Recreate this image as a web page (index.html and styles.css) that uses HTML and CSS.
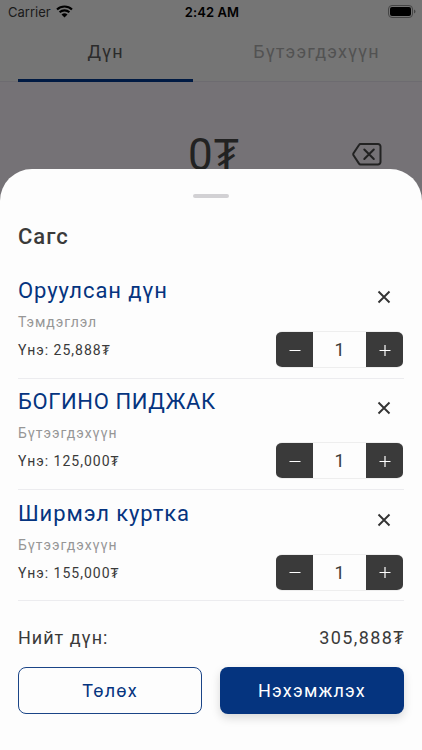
FILE: index.html
```html
<!DOCTYPE html>
<html lang="mn">
  <head>
    <meta charset="UTF-8" />
    <meta name="viewport" content="width=device-width, initial-scale=1.0" />
    <title>Сагс</title>
    <link rel="stylesheet" href="styles.css" />
  </head>
  <body>
    <div class="screen">
      <header>
        <div class="status-bar">
          <div class="carrier">
            <span>Carrier</span>
            <svg class="wifi" viewBox="0 0 17 13" width="17" height="13">
              <path d="M1 4.6a10.8 10.8 0 0 1 15 0M3.6 7.3a7.1 7.1 0 0 1 9.8 0" fill="none" stroke="#000" stroke-width="2.1" />
              <path d="M5.5 9.6a4.3 4.3 0 0 1 6 0L8.5 12.6z" />
            </svg>
          </div>
          <span class="time">2:42 AM</span>
          <svg class="battery" viewBox="0 0 28 13" width="28" height="13">
            <rect x="0.5" y="0.5" width="24" height="12" rx="3.5" fill="none" stroke="#454545" />
            <rect x="2" y="2" width="21" height="9" rx="2" />
            <path d="M26 4.5c2 .7 2 3.3 0 4z" fill="#454545" />
          </svg>
        </div>
        <nav class="tabs">
          <a class="tab active"><span>Дүн</span></a>
          <a class="tab"><span>Бүтээгдэхүүн</span></a>
        </nav>
      </header>
      <div class="amount-row">
        <span class="amount">0₮</span>
        <svg class="backspace" viewBox="0 0 30 23" width="30" height="23" fill="none" stroke="#222" stroke-width="2" stroke-linecap="round" stroke-linejoin="round">
          <path d="M8.5 1H26a2.500 2.500 0 0 1 2.500 2.500v15.500a2.500 2.500 0 0 1-2.500 2.500H8.500Q7.600 21.500 7 20.600L1.500 12.300Q1 11.300 1.500 10.300L7 2Q7.600 1 8.500 1z" />
          <path d="M12.300 6.500l9.500 9.500M21.800 6.500l-9.500 9.500" />
        </svg>
      </div>
    </div>

    <main class="sheet">
      <div class="handle"></div>
      <h1>Сагс</h1>

      <section class="item">
        <div class="info">
          <h2>Оруулсан дүн</h2>
          <p class="type">Тэмдэглэл</p>
          <p class="price">Үнэ: 25,888₮</p>
        </div>
        <div class="actions">
          <button class="remove" aria-label="Устгах">
            <svg viewBox="0 0 14 14" width="14" height="14"><path d="M1.500 1.500l11 11M12.500 1.500l-11 11" /></svg>
          </button>
          <div class="counter">
            <button aria-label="Хасах"><svg viewBox="0 0 12 12" width="12" height="12"><path d="M.5 6.500h11" /></svg></button>
            <span>1</span>
            <button aria-label="Нэмэх"><svg viewBox="0 0 12 12" width="12" height="12"><path d="M.5 6.500h11M6 1v11" /></svg></button>
          </div>
        </div>
      </section>

      <section class="item">
        <div class="info">
          <h2 class="caps">БОГИНО ПИДЖАК</h2>
          <p class="type">Бүтээгдэхүүн</p>
          <p class="price">Үнэ: 125,000₮</p>
        </div>
        <div class="actions">
          <button class="remove" aria-label="Устгах">
            <svg viewBox="0 0 14 14" width="14" height="14"><path d="M1.500 1.500l11 11M12.500 1.500l-11 11" /></svg>
          </button>
          <div class="counter">
            <button aria-label="Хасах"><svg viewBox="0 0 12 12" width="12" height="12"><path d="M.5 6.500h11" /></svg></button>
            <span>1</span>
            <button aria-label="Нэмэх"><svg viewBox="0 0 12 12" width="12" height="12"><path d="M.5 6.500h11M6 1v11" /></svg></button>
          </div>
        </div>
      </section>

      <section class="item">
        <div class="info">
          <h2>Ширмэл куртка</h2>
          <p class="type">Бүтээгдэхүүн</p>
          <p class="price">Үнэ: 155,000₮</p>
        </div>
        <div class="actions">
          <button class="remove" aria-label="Устгах">
            <svg viewBox="0 0 14 14" width="14" height="14"><path d="M1.500 1.500l11 11M12.500 1.500l-11 11" /></svg>
          </button>
          <div class="counter">
            <button aria-label="Хасах"><svg viewBox="0 0 12 12" width="12" height="12"><path d="M.5 6.500h11" /></svg></button>
            <span>1</span>
            <button aria-label="Нэмэх"><svg viewBox="0 0 12 12" width="12" height="12"><path d="M.5 6.500h11M6 1v11" /></svg></button>
          </div>
        </div>
      </section>

      <div class="total">
        <span class="total-label">Нийт дүн:</span>
        <span class="total-sum">305,888₮</span>
      </div>
      <div class="buttons">
        <button class="btn btn-outline">Төлөх</button>
        <button class="btn btn-primary">Нэхэмжлэх</button>
      </div>
    </main>
  </body>
</html>
```
FILE: styles.css
```css
* {
  box-sizing: border-box;
}

body {
  margin: 0;
  height: 750px;
  position: relative;
  overflow: hidden;
  background: #757276;
  color: #3a3a3a;
  font-family: Roboto, "Noto Sans", sans-serif;
}

h1,
h2,
p {
  margin: 0;
  white-space: nowrap;
}

button {
  padding: 0;
  border: none;
  background: none;
  font-family: inherit;
}

/* dimmed page behind the sheet */
header {
  height: 82px;
  background: #757575;
  border-bottom: 1px solid #6d6b70;
}

.status-bar {
  height: 23px;
  padding: 0 6px 0 8px;
  display: grid;
  grid-template-columns: 1fr auto 1fr;
  align-items: center;
  color: #000;
  font-family: Inter, sans-serif;
  font-size: 13px;
}

.carrier {
  display: flex;
  align-items: center;
  gap: 5px;
  color: #1a1a1a;
}

.time {
  font-weight: 600;
  letter-spacing: 0.1px;
}

.battery {
  justify-self: end;
}

.tabs {
  display: grid;
  grid-template-columns: 1fr 1fr;
  height: 59px;
}

.tab {
  display: flex;
  justify-content: center;
  align-items: center;
  padding-bottom: 2px;
  color: #525252;
  font-size: 18px;
  letter-spacing: 1.1px;
}

.tab.active {
  margin: 0 18px;
  color: #2b2b2b;
  border-bottom: 3px solid #001a43;
  border-radius: 3px 3px 0 0;
  padding-bottom: 0;
}

.amount-row {
  display: grid;
  grid-template-columns: 1fr auto 1fr;
  align-items: center;
  height: 144px;
  padding: 0 40px 0 46px;
}

.amount {
  grid-column: 2;
  padding-bottom: 2px;
  color: #222;
  font-size: 44px;
  letter-spacing: 1px;
}

.backspace {
  justify-self: end;
}

/* cart sheet */
.sheet {
  position: absolute;
  top: 169px;
  left: 0;
  right: 0;
  bottom: 0;
  padding: 25px 18px 0;
  background: #fdfdfd;
  border-radius: 32px 32px 0 0;
}

.handle {
  width: 36px;
  height: 4px;
  margin: 0 auto;
  border-radius: 2px;
  background: #d2d1d4;
}

h1 {
  margin-top: 24px;
  font-size: 22px;
  line-height: 30px;
  font-weight: 500;
  letter-spacing: 1px;
}

.item {
  display: flex;
  justify-content: space-between;
  height: 111.3px;
  padding-right: 1px;
  border-bottom: 1px solid #ececef;
}

h1 + .item {
  margin-top: 15.5px;
}

.info {
  padding-top: 9.5px;
}

h2 {
  color: #05347f;
  font-size: 22px;
  line-height: 28px;
  font-weight: 400;
  letter-spacing: 0.9px;
}

.caps {
  letter-spacing: 0.6px;
}

.type {
  margin-top: 8px;
  color: #969696;
  font-size: 14px;
  line-height: 18px;
  letter-spacing: 0.95px;
}

.price {
  margin-top: 10px;
  font-size: 14px;
  line-height: 18px;
  letter-spacing: 1px;
}

.actions {
  display: flex;
  flex-direction: column;
  align-items: flex-end;
  padding-top: 22.5px;
}

.remove {
  height: 14px;
  margin-right: 12px;
  line-height: 0;
}

.remove path {
  fill: none;
  stroke: #333;
  stroke-width: 1.9;
}

.counter {
  display: flex;
  width: 127px;
  height: 37px;
  margin-top: 27px;
  border: 1px solid #eee;
  border-width: 1px 0;
  border-radius: 6px;
  overflow: hidden;
}

.counter button {
  display: flex;
  justify-content: center;
  align-items: center;
  width: 37px;
  margin: -1px 0;
  background: #3a3a3a;
}

.counter path {
  fill: none;
  stroke: #fff;
  stroke-width: 1.2;
}

.counter span {
  flex: 1;
  text-align: center;
  font-size: 18px;
  line-height: 36px;
}

.total {
  display: flex;
  justify-content: space-between;
  margin-top: 26px;
  font-size: 18px;
  line-height: 22px;
}

.total-label {
  letter-spacing: 1px;
}

.total-sum {
  letter-spacing: 1.4px;
  margin-right: -1px;
}

.buttons {
  display: grid;
  grid-template-columns: 1fr 1fr;
  gap: 18px;
  margin-top: 18px;
}

.btn {
  height: 47px;
  border-radius: 8px;
  font-size: 18px;
  letter-spacing: 1.2px;
}

.btn-outline {
  color: #05347f;
  border: 1px solid #1b4587;
}

.btn-primary {
  color: #fff;
  background: #05347f;
  box-shadow: 0 4px 10px rgba(0, 0, 0, 0.15);
}
```
